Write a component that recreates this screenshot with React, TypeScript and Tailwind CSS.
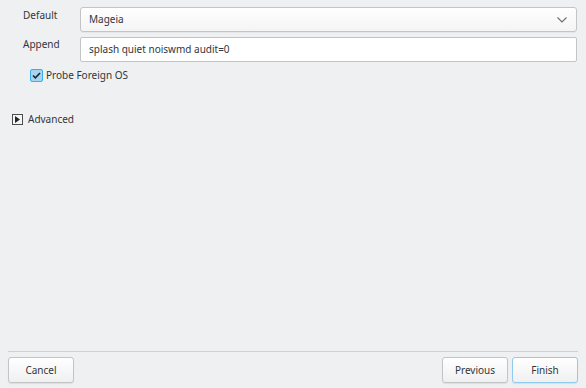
import React from "react";

export default function App() {
  const font = { fontFamily: '"Noto Sans", "Open Sans", sans-serif' };
  return (
    <div
      className="w-[586px] h-[388px] bg-[#eff0f1] text-[#31363b] text-[10px] flex flex-col"
      style={font}
    >
      <div className="flex-1 flex flex-col pl-[23px] pr-[9px] pt-[7px]">
        <div className="grid grid-cols-[57px_1fr] gap-y-[5px]">
          <div className="pt-[1px] leading-[14px]">Default</div>
          <div className="h-[25px] rounded-[3px] border border-[#c3c4c5] bg-gradient-to-b from-white to-[#f4f4f4] flex items-center justify-between pl-[8px] pr-[9px] shadow-[0_1px_0_rgba(0,0,0,0.04)]">
            <span>Mageia</span>
            <svg width="10" height="6" viewBox="0 0 10 6">
              <path d="M0.5 0.5 L5 5 L9.5 0.5" fill="none" stroke="#6a6e72" strokeWidth="1.1" />
            </svg>
          </div>
          <div className="pt-[0px] leading-[14px]">Append</div>
          <div className="h-[25px] rounded-[2px] border border-[#c3c4c5] bg-white flex items-center pl-[8px]">
            <span>splash quiet noiswmd audit=0</span>
          </div>
        </div>
        <label className="flex items-center ml-[7px] mt-[6px] gap-[3px]">
          <span className="w-[13px] h-[13px] rounded-[2px] border border-[#3daee9] bg-[#a5d5f0] flex items-center justify-center">
            <svg width="9" height="7" viewBox="0 0 9 7">
              <path d="M1 3.5 L3.4 5.8 L8 1" fill="none" stroke="#232629" strokeWidth="1.6" />
            </svg>
          </span>
          <span>Probe Foreign OS</span>
        </label>
        <div className="flex items-center gap-[5px] mt-[29px] -ml-[11px]">
          <span className="w-[11px] h-[11px] border border-[#4d4d4d] bg-[#f5f5f5] flex items-center justify-center">
            <svg width="5" height="7" viewBox="0 0 5 7">
              <path d="M0 0 L5 3.5 L0 7 Z" fill="#232629" />
            </svg>
          </span>
          <span>Advanced</span>
        </div>
      </div>
      <div className="mx-[8px] border-t border-[#cfd0d1]" />
      <div className="flex items-center justify-between px-[8px] pt-[5px] pb-[5px]">
        <button className="w-[66px] h-[26px] rounded-[3px] border border-[#c3c4c5] bg-gradient-to-b from-white to-[#f0f0f0] text-[#31363b] shadow-[0_1px_1px_rgba(0,0,0,0.08)]">
          Cancel
        </button>
        <div className="flex gap-[4px]">
          <button className="w-[66px] h-[26px] rounded-[3px] border border-[#c3c4c5] bg-gradient-to-b from-white to-[#f0f0f0] text-[#31363b] shadow-[0_1px_1px_rgba(0,0,0,0.08)]">
            Previous
          </button>
          <button className="w-[66px] h-[26px] rounded-[3px] border border-[#8fcbee] bg-gradient-to-b from-white to-[#f0f0f0] text-[#31363b] shadow-[0_1px_1px_rgba(0,0,0,0.08)]">
            Finish
          </button>
        </div>
      </div>
    </div>
  );
}
